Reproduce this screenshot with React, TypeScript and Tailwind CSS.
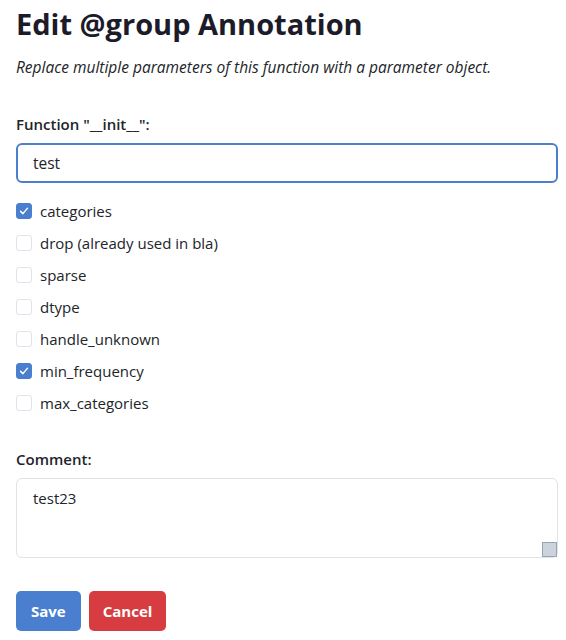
import { useState } from "react";

const params = [
  { name: "categories", checked: true },
  { name: "drop (already used in bla)", checked: false },
  { name: "sparse", checked: false },
  { name: "dtype", checked: false },
  { name: "handle_unknown", checked: false },
  { name: "min_frequency", checked: true },
  { name: "max_categories", checked: false },
];

export default function App() {
  const [selected, setSelected] = useState(params.map((p) => p.checked));

  return (
    <div className="bg-white pl-4 pr-2 pt-1 text-[#212529] [font-family:'Open_Sans','Noto_Sans',sans-serif]">
      <h2 className="text-[29px] font-bold leading-[40px] text-[#1c1b29]">Edit @group Annotation</h2>
      <p className="mt-[11px] text-[15.5px] italic leading-[24px]">
        Replace multiple parameters of this function with a parameter object.
      </p>

      <label className="mt-[33px] block text-[15px] font-semibold leading-[24px]">
        Function "__init__":
      </label>
      <input
        autoFocus
        defaultValue="test"
        className="mt-[7px] block h-[40px] w-full rounded-[6px] border-2 border-[#4a7fd0] px-[15px] text-[15.5px] caret-black outline-none"
      />

      <div className="mt-[12px] flex flex-col">
        {params.map((p, i) => (
          <label key={p.name} className="flex h-[32px] items-center gap-[8px] text-[15px]">
            <span
              className={`flex h-[16px] w-[16px] items-center justify-center rounded-[3px] border ${
                selected[i] ? "border-[#4a7fd0] bg-[#4a7fd0]" : "border-[#dfe3ea] bg-white"
              }`}
              onClick={() => setSelected((s) => s.map((v, j) => (j === i ? !v : v)))}
            >
              {selected[i] && (
                <svg viewBox="0 0 16 16" className="h-[12px] w-[12px]" fill="none">
                  <path d="M3.5 8.5l3 3 6-7" stroke="white" strokeWidth="2" strokeLinecap="round" strokeLinejoin="round" />
                </svg>
              )}
            </span>
            {p.name}
          </label>
        ))}
      </div>

      <label className="mt-[28px] block text-[15px] font-semibold leading-[24px]">Comment:</label>
      <textarea
        defaultValue="test23"
        className="mt-[7px] block h-[80px] w-full resize-y rounded-[6px] border border-[#dfe3ea] px-[16px] py-[8px] text-[15px] outline-none [&::-webkit-resizer]:border [&::-webkit-resizer]:border-[#9aa3b2] [&::-webkit-resizer]:bg-[#cdd3dd]"
      />

      <div className="mt-[33px] flex gap-[8px] pb-2">
        <button className="h-[40px] rounded-[5px] bg-[#4a7fd0] px-[15px] text-[15px] font-bold text-white">Save</button>
        <button className="h-[40px] rounded-[5px] bg-[#d63c40] px-[14px] text-[15px] font-bold text-white">Cancel</button>
      </div>
    </div>
  );
}
